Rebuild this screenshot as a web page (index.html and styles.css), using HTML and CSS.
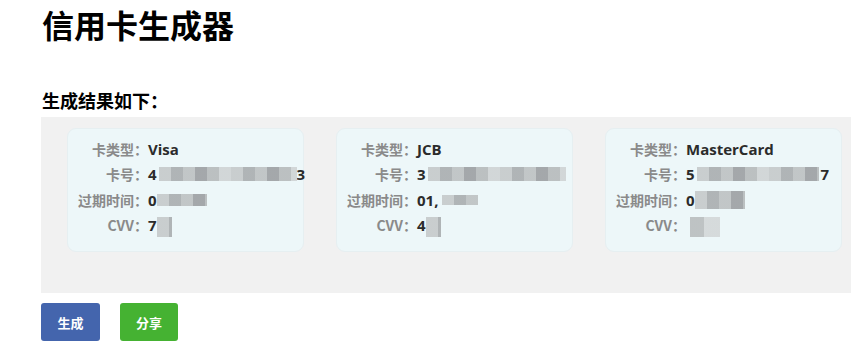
FILE: index.html
```html
<!DOCTYPE html>
<html lang="zh-CN">
<head>
<meta charset="utf-8">
<title>信用卡生成器</title>
<link rel="stylesheet" href="styles.css">
</head>
<body>
<div class="page">
  <h1 class="title">信用卡生成器</h1>
  <h2 class="subtitle">生成结果如下：</h2>
  <div class="results">
    <div class="card">
      <div class="row"><span class="label">卡类型：</span><span class="value">Visa</span></div>
      <div class="row"><span class="label">卡号：</span><span class="value">4<span class="mosaic m-num"></span>3</span></div>
      <div class="row"><span class="label">过期时间：</span><span class="value">0<span class="mosaic m-exp1"></span></span></div>
      <div class="row"><span class="label">CVV：</span><span class="value">7<span class="mosaic m-cvv"></span></span></div>
    </div>
    <div class="card">
      <div class="row"><span class="label">卡类型：</span><span class="value">JCB</span></div>
      <div class="row"><span class="label">卡号：</span><span class="value">3<span class="mosaic m-num2"></span></span></div>
      <div class="row"><span class="label">过期时间：</span><span class="value">01,<span class="mosaic m-exp2"></span></span></div>
      <div class="row"><span class="label">CVV：</span><span class="value">4<span class="mosaic m-cvv"></span></span></div>
    </div>
    <div class="card">
      <div class="row"><span class="label">卡类型：</span><span class="value">MasterCard</span></div>
      <div class="row"><span class="label">卡号：</span><span class="value">5<span class="mosaic m-num3"></span>7</span></div>
      <div class="row"><span class="label">过期时间：</span><span class="value">0<span class="mosaic m-exp3"></span></span></div>
      <div class="row"><span class="label">CVV：</span><span class="value"><span class="mosaic m-cvv3"></span></span></div>
    </div>
  </div>
  <div class="actions">
    <button class="btn btn-blue">生成</button>
    <button class="btn btn-green">分享</button>
  </div>
</div>
</body>
</html>
```

FILE: styles.css
```css
html, body {
  margin: 0;
  padding: 0;
  background: #ffffff;
}
body {
  font-family: "Noto Sans CJK SC", "Noto Sans", sans-serif;
  color: #000;
}
.page {
  padding-left: 41px;
  overflow: hidden;
  width: 810px;
}
.title {
  margin: 0;
  padding-top: 2px;
  font-size: 32px;
  line-height: 44px;
  font-weight: 700;
  padding-left: 1px;
}
.subtitle {
  margin: 0;
  margin-top: 41px;
  font-size: 18px;
  line-height: 26px;
  font-weight: 700;
  padding-left: 1px;
}
.results {
  margin-top: 4px;
  background: #f1f1f1;
  height: 176px;
  padding: 11px 0 0 26px;
  box-sizing: border-box;
  display: flex;
  gap: 32px;
  width: 830px;
}
.card {
  width: 237px;
  height: 124px;
  flex: none;
  box-sizing: border-box;
  background: #edf7f9;
  border: 1px solid #e6eff1;
  border-radius: 9px;
  padding: 7px 0 0 9px;
}
.row {
  display: flex;
  align-items: center;
  height: 25.5px;
  font-size: 14px;
  font-weight: 700;
}
.label {
  width: 71px;
  text-align: right;
  color: #8a8a8a;
  flex: none;
}
.value {
  color: #2b2b2b;
  font-family: "Open Sans", "Noto Sans CJK SC", sans-serif;
  font-size: 15px;
  display: flex;
  align-items: center;
}
.mosaic {
  display: inline-block;
  height: 14px;
  background: repeating-linear-gradient(90deg,
    #c5c9ca 0 12px, #a9adaf 12px 24px, #bdc1c2 24px 36px,
    #9c9fa2 36px 48px, #b6babb 48px 60px, #cfd3d4 60px 72px);
  opacity: 0.9;
}
.m-num { width: 138px; margin-left: 2px; }
.m-num2 { width: 138px; margin-left: 2px; }
.m-num3 { width: 122px; margin-left: 2px; margin-right: 2px; }
.m-exp1 { width: 50px; height: 12px; }
.m-exp2 { width: 36px; height: 10px; margin-left: 4px; }
.m-exp3 { width: 50px; height: 18px; }
.m-cvv { width: 15px; height: 20px; margin-top: 4px; }
.m-cvv3 { width: 30px; height: 20px; margin-left: 4px; margin-top: 4px;
  background: linear-gradient(90deg, #b9bdbe 0 14px, #d3d7d8 14px 30px); }
.actions {
  display: flex;
  gap: 20px;
  margin-top: 10px;
}
.btn {
  border: none;
  border-radius: 3px;
  color: #fff;
  font-family: "Noto Sans CJK SC", sans-serif;
  font-size: 13px;
  font-weight: 700;
  height: 38px;
  padding: 0;
}
.btn-blue {
  width: 59px;
  background: #4465ad;
}
.btn-green {
  width: 58px;
  background: #45b232;
}
```
